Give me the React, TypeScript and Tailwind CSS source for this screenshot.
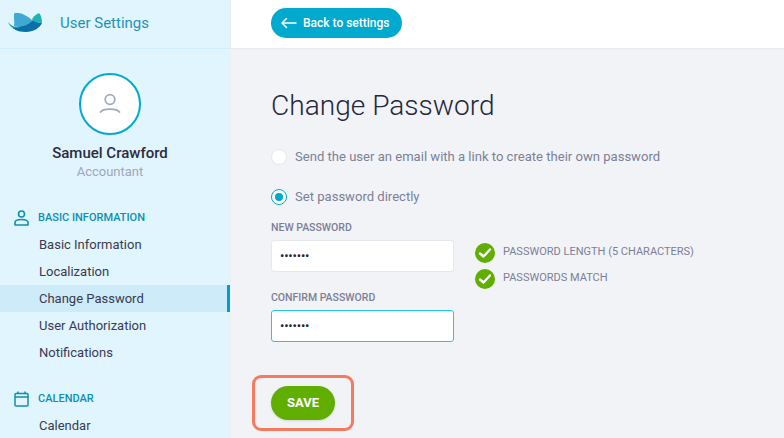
import React from "react";

const basicItems = ["Basic Information", "Localization", "Change Password", "User Authorization", "Notifications"];

function Logo() {
  return (
    <svg width="36" height="22" viewBox="8 13 36 22">
      <path d="M8 22C10 25 14 27 18 27L14 29C11 27 9 25 8 22Z" fill="#1aa6b7" />
      <path d="M14.500 13C19 12 27 15 32 20L34 24C28 28 20 28 14 26C15 22 13 17 14.500 13Z" fill="#3fa9d3" />
      <path d="M13 28C20 27 28 26 33 20C36 22 39 23 42 23C40 28 33 32 26 32C21 32 16 31 13 28Z" fill="#0a70a6" />
      <path d="M32 20C33 16 37 14 39 13C41 15 42 19 42 23C38 23 35 22 32 20Z" fill="#20b3b3" />
    </svg>
  );
}

function AvatarIcon() {
  return (
    <svg width="24" height="24" viewBox="0 0 24 24" fill="none" stroke="#a3a9bd" strokeWidth="1.75" strokeLinecap="round">
      <circle cx="12" cy="7.500" r="4.800" />
      <path d="M2.500 20C5 16 19 16 21.500 20" />
    </svg>
  );
}

function SectionUserIcon() {
  return (
    <svg width="15" height="16" viewBox="0 0 15 16" fill="none" stroke="#0e8fb0" strokeWidth="1.600">
      <circle cx="7.500" cy="4" r="3" />
      <path d="M1 15V12.500C1 10.500 3.500 9.500 7.500 9.500S14 10.500 14 12.500V15Z" strokeLinejoin="round" />
    </svg>
  );
}

function SectionCalendarIcon() {
  return (
    <svg width="15" height="16" viewBox="0 0 15 16" fill="none" stroke="#0e8fb0" strokeWidth="1.500">
      <rect x="1" y="2.500" width="13" height="12.500" rx="1" />
      <path d="M1 6H14M4 0.500V3M11 0.500V3" />
    </svg>
  );
}

function CheckIcon() {
  return (
    <svg width="14" height="14" viewBox="0 0 14 14" fill="none" stroke="white" strokeWidth="2.400" strokeLinecap="round" strokeLinejoin="round">
      <path d="M2 7.500L5.500 10.500L12 3.500" />
    </svg>
  );
}

function Radio({ checked, label }: { checked?: boolean; label: string }) {
  return (
    <div className="flex h-4 items-center gap-2">
      {checked ? (
        <span className="flex h-4 w-4 items-center justify-center rounded-full border border-[#00a9ce] bg-white">
          <span className="h-2 w-2 rounded-full bg-[#00a9ce]" />
        </span>
      ) : (
        <span className="h-4 w-4 rounded-full border border-[#e6e8ee] bg-white" />
      )}
      <span className="text-[13.07px] text-[#7b8096]">{label}</span>
    </div>
  );
}

function Rule({ label }: { label: string }) {
  return (
    <div className="flex h-[26px] items-center gap-2">
      <span className="flex h-5 w-5 items-center justify-center rounded-full bg-[#5fae00]">
        <CheckIcon />
      </span>
      <span className="-translate-y-px text-[11px] text-[#7b8096]">{label}</span>
    </div>
  );
}

export default function App() {
  return (
    <div className="flex h-[438px] w-[784px] overflow-hidden bg-[#f2f3f6] font-['Roboto',sans-serif]">
      {/* Sidebar */}
      <aside className="w-[231px] shrink-0 border-r border-[#eceef2] bg-[#e1f5fe]">
        <div className="flex h-[49px] items-center border-b border-[#cdeefc] pl-2">
          <Logo />
          <span className="ml-[16px] -translate-y-px text-[15px] text-[#1f93b2]">User Settings</span>
        </div>

        <div className="mt-6 flex flex-col items-center pr-[10px]">
          <div className="flex h-[62px] w-[62px] items-center justify-center rounded-full border-2 border-[#00a9ce] bg-white">
            <AvatarIcon />
          </div>
          <div className="mt-[8px] text-[15px] leading-5 font-medium text-[#2a2c3c]">Samuel Crawford</div>
          <div className="text-[13px] leading-[18px] text-[#a0a6ba]">Accountant</div>
        </div>

        <div className="mt-[27px] flex h-5 items-center pl-[14px]">
          <SectionUserIcon />
          <span className="ml-[9px] text-[11px] font-medium text-[#0e8fb0]">BASIC INFORMATION</span>
        </div>
        <nav className="mt-[3px]">
          {basicItems.map((item) =>
            item === "Change Password" ? (
              <div key={item} className="flex h-[27px] items-center border-r-[3px] border-[#00a0c6] bg-[#cdebf9] pl-[39px] text-[13px] text-[#3a3a50]">
                {item}
              </div>
            ) : (
              <div key={item} className="flex h-[27px] items-center pl-[39px] text-[13px] text-[#3a3a50]">
                {item}
              </div>
            )
          )}
        </nav>

        <div className="mt-[23px] flex h-5 items-center pl-[14px]">
          <SectionCalendarIcon />
          <span className="ml-[9px] text-[11px] font-medium text-[#0e8fb0]">CALENDAR</span>
        </div>
        <div className="mt-[3px] flex h-[27px] items-center pl-[39px] text-[13px] text-[#3a3a50]">Calendar</div>
      </aside>

      {/* Main */}
      <main className="relative flex-1">
        <div className="flex h-12 items-start bg-white pt-2 pl-10 shadow-[0_1px_2px_rgba(0,0,0,0.05)]">
          <button className="flex h-[30px] w-[131px] items-center gap-[6px] rounded-full bg-[#00a9ce] pl-[10px] text-[12px] font-medium text-white">
            <svg width="16" height="12" viewBox="0 0 16 12" fill="none" stroke="white" strokeWidth="1.500" strokeLinecap="round" strokeLinejoin="round">
              <path d="M1 6H15M5.500 1.500L1 6L5.500 10.500" />
            </svg>
            Back to settings
          </button>
        </div>

        <div className="pl-10">
          <h1 className="mt-[40px] text-[28.1px] leading-9 font-light text-[#25273a]">Change Password</h1>

          <div className="mt-[25px] flex flex-col gap-6">
            <Radio label="Send the user an email with a link to create their own password" />
            <Radio checked label="Set password directly" />
          </div>

          <div className="mt-[16px] flex">
            <div className="w-[183px]">
              <div className="text-[10.5px] leading-[14px] font-medium text-[#7b8096]">NEW PASSWORD</div>
              <div className="mt-[5px] flex h-8 items-center rounded-[3px] border border-[#e6e8ee] bg-white pl-2 text-[13px] tracking-[-0.2px] text-[#25273a]">
                •••••••
              </div>
              <div className="mt-[19px] text-[10.5px] leading-[14px] font-medium text-[#7b8096]">CONFIRM PASSWORD</div>
              <div className="mt-[5px] flex h-8 items-center rounded-[3px] border border-[#26c6e0] bg-white pl-2 text-[13px] tracking-[-0.2px] text-[#25273a]">
                •••••••
              </div>
            </div>
            <div className="mt-[19px] ml-[21px]">
              <Rule label="PASSWORD LENGTH (5 CHARACTERS)" />
              <Rule label="PASSWORDS MATCH" />
            </div>
          </div>

          <button className="mt-[44px] h-[34px] w-16 rounded-full bg-[#5fae00] text-[13px] font-bold text-white shadow-sm">SAVE</button>
        </div>

        {/* annotation around the save button */}
        <div className="absolute top-[375px] left-[21px] h-[56px] w-[102px] rounded-[9px] border-[3px] border-[#f47a60]" />
      </main>
    </div>
  );
}
